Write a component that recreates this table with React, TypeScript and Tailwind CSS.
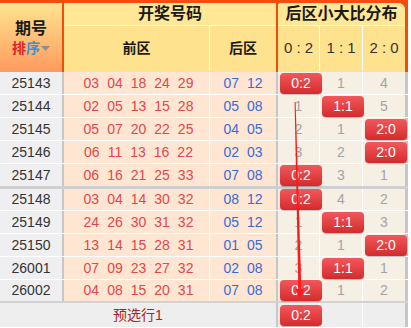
import React from 'react';

type Row = { id: string; f: string[]; b: string[]; d: string[] };

const rows: Row[] = [
  { id: '25143', f: ['03', '04', '18', '24', '29'], b: ['07', '12'], d: ['0:2', '1', '4'] },
  { id: '25144', f: ['02', '05', '13', '15', '28'], b: ['05', '08'], d: ['1', '1:1', '5'] },
  { id: '25145', f: ['05', '07', '20', '22', '25'], b: ['04', '05'], d: ['2', '1', '2:0'] },
  { id: '25146', f: ['06', '11', '13', '16', '22'], b: ['02', '03'], d: ['3', '2', '2:0'] },
  { id: '25147', f: ['06', '16', '21', '25', '33'], b: ['07', '08'], d: ['0:2', '3', '1'] },
  { id: '25148', f: ['03', '04', '14', '30', '32'], b: ['08', '12'], d: ['0:2', '4', '2'] },
  { id: '25149', f: ['24', '26', '30', '31', '32'], b: ['05', '12'], d: ['1', '1:1', '3'] },
  { id: '25150', f: ['13', '14', '15', '28', '31'], b: ['01', '05'], d: ['2', '1', '2:0'] },
  { id: '26001', f: ['07', '09', '23', '27', '32'], b: ['02', '08'], d: ['3', '1:1', '1'] },
  { id: '26002', f: ['04', '08', '15', '20', '31'], b: ['07', '08'], d: ['0:2', '1', '2'] },
];

const distWidths = ['w-[42px] border-r border-white', 'w-[43px] border-r border-white', 'w-[42px]'];

function Badge({ text }: { text: string }) {
  return (
    <div className="relative z-10 ml-[2px] flex h-[21px] w-[42px] shrink-0 items-center justify-center rounded-[4px] bg-gradient-to-b from-[#f2575b] to-[#d32a2c] text-[14px] text-white shadow-[0_1px_1px_rgba(0,0,0,0.25)]">
      {text}
    </div>
  );
}

function DistCell({ value, cls }: { value: string; cls: string }) {
  return (
    <div className={`flex items-center ${cls} ${value.includes(':') ? 'justify-start' : 'justify-center'}`}>
      {value.includes(':') ? <Badge text={value} /> : <span className="text-[14px] text-[#a3a3a3]">{value}</span>}
    </div>
  );
}

function BodyRow({ row, index }: { row: Row; index: number }) {
  const h = index === 5 || index === 9 ? 'h-[21px]' : 'h-[22px]';
  const border = index === 4 ? 'border-b-[3px] border-[#cfcfcf]' : index === 9 ? '' : 'border-b border-white';
  return (
    <div className={`flex ${border}`}>
      <div className={`flex ${h} w-[62px] items-center justify-center bg-[#efeff1] text-[14px] text-[#333]`}>{row.id}</div>
      <div className="w-[2px] bg-[#c6c6c6]" />
      <div className="flex w-[146px] items-center justify-center gap-[8px] border-r border-white bg-[#ffe6d3] pl-[4px] text-[14px] text-[#e2474b]">
        {row.f.map((n, i) => (
          <span key={i}>{n}</span>
        ))}
      </div>
      <div className="flex w-[66px] items-center justify-center gap-[8px] bg-[#ffe6d3] text-[14px] text-[#3a6bd4]">
        {row.b.map((n, i) => (
          <span key={i}>{n}</span>
        ))}
      </div>
      <div className="w-[2px] bg-[#c6c6c6]" />
      <div className="flex bg-[#f6f0e4]">
        {row.d.map((v, i) => (
          <DistCell key={i} value={v} cls={distWidths[i]} />
        ))}
      </div>
      <div className="w-[3px] bg-[#c6c6c6]" />
    </div>
  );
}

export default function App() {
  return (
    <div className="relative h-[328px] w-[411px] overflow-hidden bg-white font-['Liberation_Sans','Noto_Sans_CJK_SC',sans-serif]">
      <div className="w-[408px]">
        {/* header */}
        <div className="flex bg-[#f14d0c] pt-[3px] pr-[3px]">
          <div className="flex h-[69px] w-[62px] flex-col items-center bg-gradient-to-b from-[#ffe48f] to-[#ff9a5e] pt-[16px]">
            <div className="text-[16px] font-bold leading-[20px] text-[#1a1a1a]">期号</div>
            <div className="mt-[1px] flex items-center text-[14px] font-bold leading-[17px]">
              <span className="text-[#e0252a]">排</span>
              <span className="text-[#2e93e6]">序</span>
              <svg width="9" height="6" viewBox="0 0 9 6" className="ml-[1px]">
                <path d="M0 0 L9 0 L4.5 5 Z" fill="#8c8c8c" />
              </svg>
            </div>
          </div>
          <div className="ml-[2px] flex w-[212px] flex-col bg-[#ffe28e]">
            <div className="flex h-[23px] items-center justify-center border-b border-white bg-[#ffe796] text-[16px] font-bold text-[#1a1a1a]">
              开奖号码
            </div>
            <div className="flex h-[45px]">
              <div className="flex w-[146px] items-center justify-center border-r border-white text-[14px] font-bold text-[#1a1a1a]">前区</div>
              <div className="flex w-[66px] items-center justify-center text-[14px] font-bold text-[#1a1a1a]">后区</div>
            </div>
          </div>
          <div className="ml-[2px] flex w-[127px] flex-col rounded-tl-[3px] rounded-tr-[7px] bg-[#ffe28e]">
            <div className="flex h-[23px] items-center justify-center border-b border-white bg-[#ffe796] rounded-tr-[7px] rounded-tl-[3px] text-[16px] font-bold text-[#1a1a1a]">
              后区小大比分布
            </div>
            <div className="flex h-[45px] text-[15px] text-[#333]">
              <div className="flex w-[42px] items-center justify-center border-r border-white">0 : 2</div>
              <div className="flex w-[43px] items-center justify-center border-r border-white">1 : 1</div>
              <div className="flex w-[42px] items-center justify-center">2 : 0</div>
            </div>
          </div>
        </div>

        {/* body */}
        {rows.map((r, i) => (
          <BodyRow key={r.id} row={r} index={i} />
        ))}

        {/* footer */}
        <div className="flex border-t-[2px] border-[#d2d2d2] bg-[#eeeeee]">
          <div className="flex h-[24px] w-[276px] items-center justify-center text-[14px] text-[#a52424]">预选行1</div>
          <div className="w-[2px] bg-[#c6c6c6]" />
          <div className="flex">
            <DistCell value="0:2" cls={distWidths[0]} />
            <div className={distWidths[1]} />
            <div className={distWidths[2]} />
          </div>
          <div className="w-[3px] bg-[#c6c6c6]" />
        </div>
      </div>

      {/* trend arrow */}
      <svg className="pointer-events-none absolute left-0 top-0 z-20" width="411" height="328" viewBox="0 0 411 328">
        <polygon points="294.6,102 295.6,102 301.4,291 298.4,291" fill="#ff1a1a" />
        <polygon points="295.6,289 303.8,289 300,300" fill="#ff1a1a" />
      </svg>
    </div>
  );
}
